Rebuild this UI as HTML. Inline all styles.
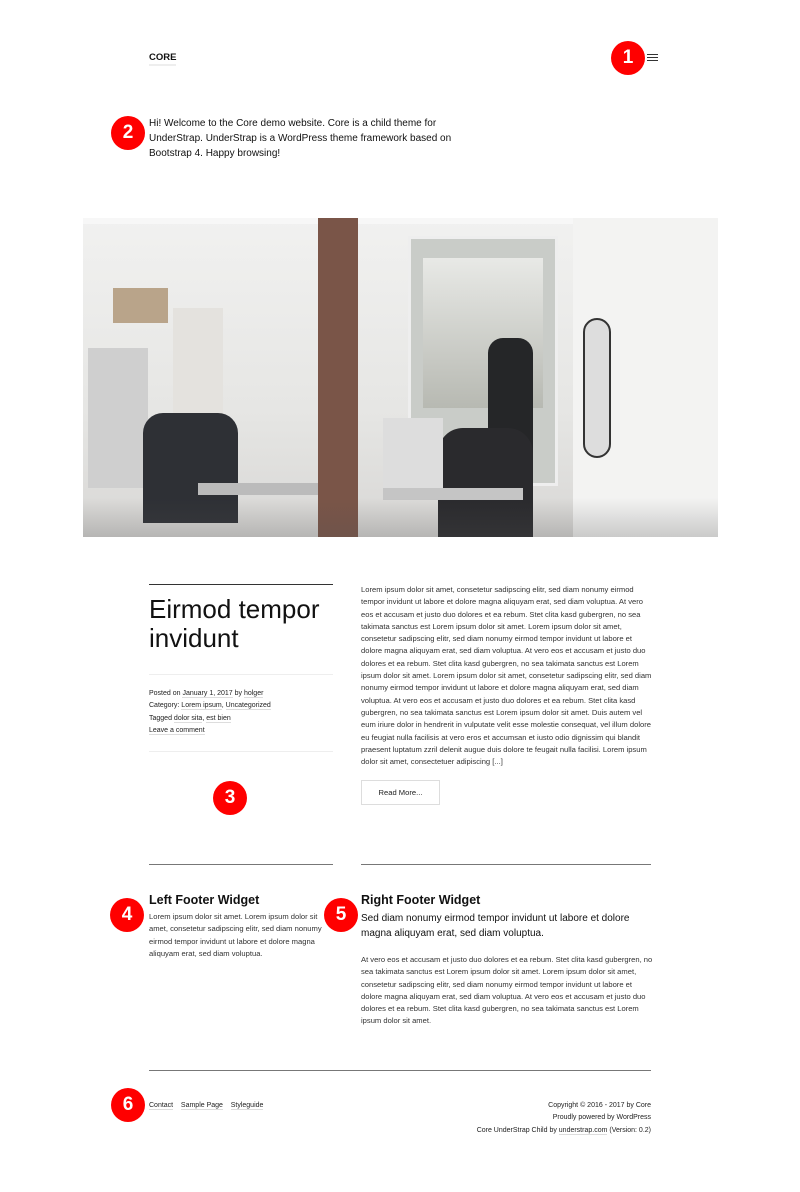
<!DOCTYPE html>
<html><head><meta charset="utf-8"><style>
*{margin:0;padding:0;box-sizing:border-box}
body{width:800px;height:1192px;background:#fff;position:relative;font-family:"Liberation Sans",Arial,sans-serif;color:#111;overflow:hidden}
.a{position:absolute}
.c{position:absolute;width:34px;height:34px;border-radius:50%;background:#f00;color:#fff;font-weight:bold;font-size:19px;text-align:center;line-height:34px}
.p{font-size:7.6px;line-height:12.3px;color:#333}
.hr{position:absolute;height:1px;background:#555}
.u{border-bottom:1px solid #ddd}
.b{position:absolute}
</style></head><body>
<div class="a" style="left:149px;top:52px;font-size:9.5px;font-weight:bold;border-bottom:2px solid #eee;padding-bottom:1px">CORE</div>
<div class="a" style="left:647px;top:54px;width:11px;height:7px;border-top:1.5px solid #333;border-bottom:1.5px solid #333"><div style="margin-top:1.5px;height:1.5px;background:#333"></div></div>
<div class="a" style="left:149px;top:116px;font-size:10px;line-height:15px;width:330px">Hi! Welcome to the Core demo website. Core is a child theme for UnderStrap. UnderStrap is a WordPress theme framework based on Bootstrap 4. Happy browsing!</div>

<div class="a" style="left:83px;top:218px;width:635px;height:319px;background:linear-gradient(180deg,#f1f1f0 0%,#e6e6e4 60%,#d8d7d5 100%);overflow:hidden">
 <div class="b" style="left:0;top:0;width:635px;height:6px;background:#f7f7f7"></div>
 <div class="b" style="left:5px;top:130px;width:60px;height:140px;background:#cfcfcf"></div>
 <div class="b" style="left:90px;top:90px;width:50px;height:190px;background:#e4e2de"></div>
 <div class="b" style="left:30px;top:70px;width:55px;height:35px;background:#b9a48a"></div>
 <div class="b" style="left:235px;top:0;width:40px;height:319px;background:#7a5548"></div>
 <div class="b" style="left:325px;top:18px;width:150px;height:250px;background:#c9ccc8;border:3px solid #eee"></div>
 <div class="b" style="left:340px;top:40px;width:120px;height:150px;background:linear-gradient(180deg,#e8e9e6,#b7b9b2)"></div>
 <div class="b" style="left:490px;top:0;width:145px;height:319px;background:#f3f3f2"></div>
 <div class="b" style="left:500px;top:100px;width:28px;height:140px;border-radius:14px;background:#ddd;border:2px solid #333"></div>
 <div class="b" style="left:60px;top:195px;width:95px;height:110px;background:#2e3035;border-radius:20px 20px 0 0"></div>
 <div class="b" style="left:115px;top:265px;width:120px;height:12px;background:#bbb"></div>
 <div class="b" style="left:405px;top:120px;width:45px;height:170px;background:#252628;border-radius:15px 15px 0 0"></div>
 <div class="b" style="left:355px;top:210px;width:95px;height:110px;background:#2a2a2d;border-radius:25px 25px 0 0"></div>
 <div class="b" style="left:300px;top:200px;width:60px;height:70px;background:#ddd"></div>
 <div class="b" style="left:300px;top:270px;width:140px;height:12px;background:#c5c5c5"></div>
 <div class="b" style="left:0;top:280px;width:635px;height:39px;background:linear-gradient(180deg,rgba(0,0,0,0),rgba(80,80,80,.25))"></div>
</div>

<div class="hr" style="left:149px;top:584px;width:184px;background:#333"></div>
<div class="a" style="left:149px;top:595px;font-size:26px;line-height:29px;width:190px;color:#111">Eirmod tempor invidunt</div>
<div class="hr" style="left:149px;top:674px;width:184px;background:#eee"></div>
<div class="a p" style="left:149px;top:688px;font-size:7px;color:#222"><div>Posted on <span class="u">January 1, 2017</span> by <span class="u">holger</span></div><div>Category: <span class="u">Lorem ipsum</span>, <span class="u">Uncategorized</span></div><div>Tagged <span class="u">dolor sita</span>, <span class="u">est bien</span></div><div><span class="u">Leave a comment</span></div></div>
<div class="hr" style="left:149px;top:751px;width:184px;background:#eee"></div>
<div class="a p" style="left:361px;top:584px;width:292px">Lorem ipsum dolor sit amet, consetetur sadipscing elitr, sed diam nonumy eirmod tempor invidunt ut labore et dolore magna aliquyam erat, sed diam voluptua. At vero eos et accusam et justo duo dolores et ea rebum. Stet clita kasd gubergren, no sea takimata sanctus est Lorem ipsum dolor sit amet. Lorem ipsum dolor sit amet, consetetur sadipscing elitr, sed diam nonumy eirmod tempor invidunt ut labore et dolore magna aliquyam erat, sed diam voluptua. At vero eos et accusam et justo duo dolores et ea rebum. Stet clita kasd gubergren, no sea takimata sanctus est Lorem ipsum dolor sit amet. Lorem ipsum dolor sit amet, consetetur sadipscing elitr, sed diam nonumy eirmod tempor invidunt ut labore et dolore magna aliquyam erat, sed diam voluptua. At vero eos et accusam et justo duo dolores et ea rebum. Stet clita kasd gubergren, no sea takimata sanctus est Lorem ipsum dolor sit amet. Duis autem vel eum iriure dolor in hendrerit in vulputate velit esse molestie consequat, vel illum dolore eu feugiat nulla facilisis at vero eros et accumsan et iusto odio dignissim qui blandit praesent luptatum zzril delenit augue duis dolore te feugait nulla facilisi. Lorem ipsum dolor sit amet, consectetuer adipiscing [...]</div>
<div class="a" style="left:361px;top:780px;width:79px;height:25px;border:1px solid #ddd;font-size:7.6px;text-align:center;line-height:23px;color:#222">Read More...</div>

<div class="hr" style="left:149px;top:864px;width:184px;background:#777"></div>
<div class="hr" style="left:361px;top:864px;width:290px;background:#777"></div>
<div class="a" style="left:149px;top:893px;font-size:12.5px;font-weight:bold;color:#111">Left Footer Widget</div>
<div class="a p" style="left:149px;top:911px;width:188px">Lorem ipsum dolor sit amet. Lorem ipsum dolor sit amet, consetetur sadipscing elitr, sed diam nonumy eirmod tempor invidunt ut labore et dolore magna aliquyam erat, sed diam voluptua.</div>
<div class="a" style="left:361px;top:893px;font-size:12.5px;font-weight:bold;color:#111">Right Footer Widget</div>
<div class="a" style="left:361px;top:911px;width:292px;font-size:10px;line-height:15px;color:#111">Sed diam nonumy eirmod tempor invidunt ut labore et dolore magna aliquyam erat, sed diam voluptua.</div>
<div class="a p" style="left:361px;top:954px;width:292px">At vero eos et accusam et justo duo dolores et ea rebum. Stet clita kasd gubergren, no sea takimata sanctus est Lorem ipsum dolor sit amet. Lorem ipsum dolor sit amet, consetetur sadipscing elitr, sed diam nonumy eirmod tempor invidunt ut labore et dolore magna aliquyam erat, sed diam voluptua. At vero eos et accusam et justo duo dolores et ea rebum. Stet clita kasd gubergren, no sea takimata sanctus est Lorem ipsum dolor sit amet.</div>

<div class="hr" style="left:149px;top:1070px;width:502px;background:#777"></div>
<div class="a p" style="left:149px;top:1100px;font-size:7px;color:#222"><span class="u">Contact</span>&nbsp;&nbsp;&nbsp;&nbsp;<span class="u">Sample Page</span>&nbsp;&nbsp;&nbsp;&nbsp;<span class="u">Styleguide</span></div>
<div class="a p" style="right:149px;top:1100px;font-size:7px;text-align:right;color:#222"><div>Copyright © 2016 - 2017 by Core</div><div>Proudly powered by WordPress</div><div>Core UnderStrap Child by <span class="u">understrap.com</span> (Version: 0.2)</div></div>

<div class="c" style="left:611px;top:41px">1</div>
<div class="c" style="left:111px;top:116px">2</div>
<div class="c" style="left:213px;top:781px">3</div>
<div class="c" style="left:110px;top:898px">4</div>
<div class="c" style="left:324px;top:898px">5</div>
<div class="c" style="left:111px;top:1088px">6</div>
</body></html>
